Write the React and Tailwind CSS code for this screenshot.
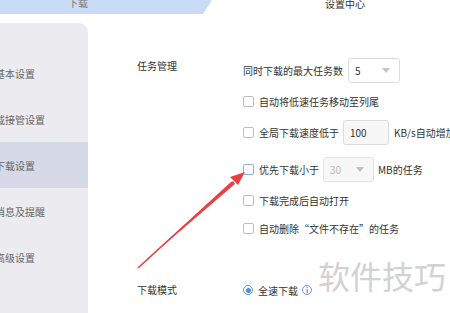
import React from "react";

const font = { fontFamily: '"Noto Sans CJK SC", "Noto Sans", sans-serif' };

function Checkbox({ blue }) {
  return (
    <span
      className={
        "inline-block w-[11px] h-[11px] rounded-[2px] border bg-white shrink-0 " +
        (blue ? "border-[#8fb0e0]" : "border-[#bdbdbd]")
      }
    />
  );
}

function Caret({ color = "#c4c4c4" }) {
  return (
    <svg width="8" height="5" viewBox="0 0 8 5">
      <path d="M0 0 L8 0 L4 5 Z" fill={color} />
    </svg>
  );
}

export default function App() {
  const sideItems = [
    { t: "基本设置" },
    { t: "下载接管设置", shift: true },
    { t: "下载设置", active: true },
    { t: "消息及提醒" },
    { t: "高级设置" },
  ];
  return (
    <div
      className="relative w-[450px] h-[313px] overflow-hidden bg-white text-[10px] text-[#333]"
      style={font}
    >
      {/* top bar */}
      <div className="flex h-[14px]">
        <div className="w-[212px] h-[14px] bg-[#c9dcf6] [clip-path:polygon(0_0,212px_0,203px_100%,0_100%)] pl-[68px]">
          <div className="text-[#777] leading-[10px] -mt-[2px]">下载</div>
        </div>
        <div className="pl-[113px] leading-[10px] -mt-[1px] text-[#333]">设置中心</div>
      </div>

      <div className="flex">
        {/* sidebar */}
        <div className="w-[88px] h-[299px] mt-[9px] bg-[#ebebf0] rounded-tr-[9px] pt-[27px] overflow-hidden shrink-0">
          {sideItems.map((it, i) => (
            <div
              key={i}
              className={
                "h-[46px] flex items-center whitespace-nowrap text-[#666] " +
                (it.active ? "bg-[#d6dae7]" : "")
              }
            >
              <span className={it.shift ? "-ml-[15px]" : "-ml-[5px]"}>{it.t}</span>
            </div>
          ))}
        </div>

        {/* main */}
        <div className="flex-1 pl-[49px] pt-[44px]">
          <div className="flex">
            <div className="w-[106px] shrink-0 leading-[16px] pt-0">任务管理</div>
            <div className="flex flex-col">
              <div className="flex items-center h-[25px] whitespace-nowrap">
                <span>同时下载的最大任务数</span>
                <div className="ml-[5px] w-[52px] h-[25px] border border-[#dcdcdc] rounded-[3px] flex items-center justify-between pl-[6px] pr-[9px]">
                  <span>5</span>
                  <Caret />
                </div>
              </div>
              <div className="flex items-center h-[20px] mt-[8px] whitespace-nowrap">
                <Checkbox />
                <span className="ml-[5px]">自动将低速任务移动至列尾</span>
              </div>
              <div className="flex items-center h-[25px] mt-[9px] whitespace-nowrap">
                <Checkbox />
                <span className="ml-[5px]">全局下载速度低于</span>
                <div className="ml-[4px] w-[46px] h-[25px] border border-[#dcdcdc] bg-[#f7f7f7] rounded-[3px] flex items-center pl-[6px]">
                  100
                </div>
                <span className="ml-[5px]">KB/s自动增加</span>
              </div>
              <div className="flex items-center h-[25px] mt-[12px] whitespace-nowrap">
                <Checkbox blue />
                <span className="ml-[5px]">优先下载小于</span>
                <div className="ml-[4px] w-[51px] h-[25px] border border-[#e3e3e3] bg-[#f7f7f7] rounded-[3px] flex items-center justify-between pl-[6px] pr-[9px] text-[#bbb]">
                  <span>30</span>
                  <Caret color="#bdbdbd" />
                </div>
                <span className="ml-[4px]">MB的任务</span>
              </div>
              <div className="flex items-center h-[20px] mt-[8px] whitespace-nowrap">
                <Checkbox />
                <span className="ml-[5px]">下载完成后自动打开</span>
              </div>
              <div className="flex items-center h-[20px] mt-[8px] whitespace-nowrap">
                <Checkbox />
                <span className="ml-[5px]">自动删除“文件不存在”的任务</span>
              </div>
            </div>
          </div>

          <div className="flex mt-[42px]">
            <div className="w-[106px] shrink-0 leading-[20px]">下载模式</div>
            <div className="flex items-center h-[20px] whitespace-nowrap">
              <span className="w-[10px] h-[10px] rounded-full border border-[#5b9be6] flex items-center justify-center">
                <span className="w-[5px] h-[5px] rounded-full bg-[#4a8fe3]" />
              </span>
              <span className="ml-[5px]">全速下载</span>
              <span className="ml-[4px] w-[10px] h-[10px] rounded-full border border-[#5b9be6] text-[#4a8fe3] text-[7px] leading-none flex items-center justify-center font-bold">
                i
              </span>
            </div>
          </div>
        </div>
      </div>

      {/* watermark */}
      <div className="absolute left-[318px] top-[255px] text-[32px] leading-[40px] text-[#c8c8c8] opacity-80 whitespace-nowrap">
        软件技巧
      </div>

      {/* red arrow */}
      <svg className="absolute left-0 top-0" width="450" height="313" viewBox="0 0 450 313">
        <path d="M137 268 L233 181 L235 184 Z" fill="#e84141" />
        <path d="M138 268 L232 182" stroke="#e84141" strokeWidth="1.6" />
        <path d="M245 172 L230 177 L238 185 Z" fill="#e84141" />
      </svg>
    </div>
  );
}
